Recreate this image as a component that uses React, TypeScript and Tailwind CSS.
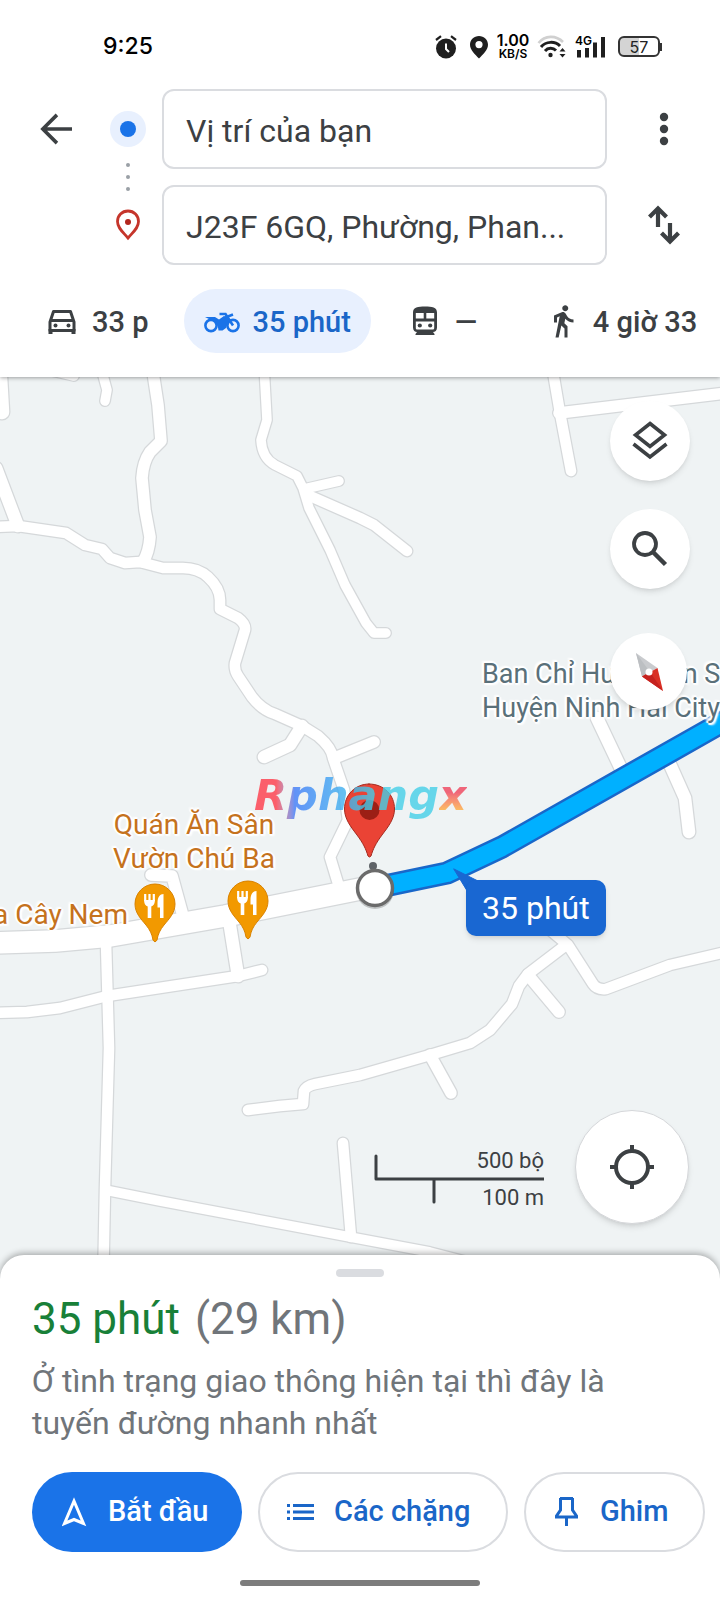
import React, { useState } from "react";

// [path, width] for every street, in map units
const roads: [string, number][] = [
  ["M-1 360 L2 412", 17],
  ["M48 370 L74 376", 12],
  ["M101 368 L107 390 L105 401", 12],
  ["M-4 468 L18 526", 15],
  ["M152 366 L158 405 L161 441 L150 452 Q143 462 142 478 L145 510 L150 537 Q149 552 143 562", 14],
  ["M-6 527 L18 526 L66 533 L85 545 L102 549 L110 558 L125 563 L140 562 L163 568 L183 568 Q198 568 208 577 Q220 588 220 600 L220 609 L238 618 Q246 624 245 630 L235 663 Q234 670 238 676 L252 697 Q262 710 275 714 L302 726 L318 736 Q332 748 333 758 L344 790 L348 820 L330 857 L340 890", 13],
  ["M264 366 L267 420 L261 440 Q262 458 275 465 L297 476 L303 488 L309 508 L330 550 L345 585 L366 623 L374 633 L386 633", 12],
  ["M304 489 L339 481", 12],
  ["M310 496 L360 518 L374 525 L407 551", 13],
  ["M302 726 L290 745 L264 757", 15],
  ["M337 757 L374 742", 14],
  ["M552 366 L560 413 L571 471", 13],
  ["M559 413 L726 393", 14],
  ["M597 718 L625 777", 15],
  ["M668 760 L685 798 L689 832", 15],
  ["M-6 943 L55 941 L110 936 L225 916 L375 886", 24],
  ["M151 875 L172 876 L183 916", 14],
  ["M229 920 L238 976", 15],
  ["M-6 1013 L27 1012 L60 1008 L107 996 L238 976 L262 970", 13],
  ["M106 942 L109 1048 L105 1188 L103 1290", 13],
  ["M105 1190 L160 1201 L350 1237 L430 1252 L500 1270", 12],
  ["M343 1143 L351 1237", 13],
  ["M248 1110 L280 1106 L303 1104 L304 1091 Q306 1086 315 1084 L360 1075 L430 1055 L470 1043 L490 1030 L512 1004 L519 986 L528 974 L566 945", 13],
  ["M550 930 L568 945 L593 984 Q597 990 606 989 L670 965 L726 952", 13],
  ["M528 975 L559 1012", 14],
  ["M430 1055 L451 1093", 14],
];

const route = "M375 888 L447 873 L502 847 L730 718";

const labelShadow =
  "[text-shadow:0_0_2px_#fff,2px_0_1px_#fff,-2px_0_1px_#fff,0_2px_1px_#fff,0_-2px_1px_#fff,2px_2px_2px_#fff,-2px_-2px_2px_#fff]";

function CarIcon() {
  return (
    <svg viewBox="0 0 36 36" className="size-9" fill="none" stroke="#3c4043" strokeWidth="3">
      <path d="M6 19 L9.500 8.500 H26.500 L30 19 V27.500 H6 Z" strokeLinejoin="round" />
      <path d="M7 17.500 H29" />
      <path d="M6.500 26 V31 M29.500 26 V31" strokeWidth="4" />
      <circle cx="11.500" cy="22.500" r="2" fill="#3c4043" stroke="none" />
      <circle cx="24.500" cy="22.500" r="2" fill="#3c4043" stroke="none" />
    </svg>
  );
}

function MotorcycleIcon() {
  return (
    <svg viewBox="0 0 36 36" className="size-9" fill="#1a73e8">
      <g fill="none" stroke="#1a73e8" strokeWidth="2.600">
        <circle cx="7" cy="22.500" r="5.600" />
        <circle cx="29" cy="22.500" r="5.600" />
        <path d="M15.500 11 H21.500 L29 22.500" />
        <path d="M20 15 L29 11.500" />
      </g>
      <path d="M1 14 H11 L15 16.500 L20 13 L25 16.500 L22 25 L18.500 27.500 H14.500 C14 21 11 17.500 5 16 Z" />
    </svg>
  );
}

function TrainIcon() {
  return (
    <svg viewBox="0 0 36 36" className="size-9">
      <path
        fillRule="evenodd"
        fill="#3c4043"
        d="M18 3.500 C25 3.500 30 4 30 9.500 V24.500 C30 27.500 28 29 26 29 L27.500 31 V32 H8.500 V31 L10 29 C8 29 6 27.500 6 24.500 V9.500 C6 4 11 3.500 18 3.500 Z M8.800 10 V15.500 H16.700 V10 Z M19.300 10 V15.500 H27.200 V10 Z M8.800 18.500 V25 C8.800 26 9.500 26.500 10.500 26.500 H25.500 C26.500 26.500 27.200 26 27.200 25 V18.500 Z"
      />
      <circle cx="12.800" cy="22.500" r="2.100" fill="#3c4043" />
      <circle cx="23.200" cy="22.500" r="2.100" fill="#3c4043" />
    </svg>
  );
}

function WalkIcon() {
  return (
    <svg viewBox="0 0 24 24" className="size-9" fill="#3c4043">
      <path d="M13.500 5.500c1.100 0 2-.9 2-2s-.9-2-2-2-2 .9-2 2 .9 2 2 2zM9.800 8.900L7 23h2.100l1.800-8 2.100 2v6h2v-7.500l-2.100-2 .6-3C14.800 12 16.800 13 19 13v-2c-1.900 0-3.500-1-4.300-2.400l-1-1.600c-.4-.6-1-1-1.700-1-.3 0-.5.1-.8.1L6 8.300V13h2V9.600l1.800-.7" />
    </svg>
  );
}

function StatusBar() {
  return (
    <div className="flex h-[89px] items-center justify-between pl-[103px] pr-[58px] pt-1 text-black">
      <span className="font-['Inter'] text-[23px] font-medium leading-none">9:25</span>
      <div className="flex items-center">
        <svg viewBox="0 0 22 24" className="mr-3 h-6 w-[22px]">
          <circle cx="11" cy="13.500" r="10" fill="#1f1f1f" />
          <path d="M1 5 L6 1.200 M16 1.200 L21 5" stroke="#1f1f1f" strokeWidth="2.200" fill="none" />
          <path d="M11 8.500 V14 L14 17" stroke="#fff" strokeWidth="2" fill="none" />
        </svg>
        <svg viewBox="0 0 20 24" className="mr-2 h-6 w-5">
          <path
            fillRule="evenodd"
            fill="#1f1f1f"
            d="M10 1 C15 1 19 4.800 19 9.800 C19 15 14 19.500 10 23.500 C6 19.500 1 15 1 9.800 C1 4.800 5 1 10 1 Z M10 6 A3.600 3.600 0 1 0 10 13.200 A3.600 3.600 0 1 0 10 6 Z"
          />
        </svg>
        <div className="mr-2 flex w-8 flex-col items-center font-['Inter'] font-semibold">
          <span className="text-base leading-[13px]">1.00</span>
          <span className="text-xs leading-[13px]">KB/S</span>
        </div>
        <svg viewBox="0 0 30 24" className="mr-2 h-6 w-[30px]" fill="none">
          <path d="M1.500 8 C8 0 19 0 26 7" stroke="#d0d0d0" strokeWidth="2.600" />
          <path d="M4 12 C9 6 18 6 23 11" stroke="#1f1f1f" strokeWidth="3" />
          <path d="M8 16 C11 12.500 16 12.500 19 15.500" stroke="#1f1f1f" strokeWidth="3" />
          <circle cx="13.500" cy="20" r="2.200" fill="#1f1f1f" />
          <path d="M22.500 16.500 L25.500 13 L28.500 16.500 Z M22.500 19 L25.500 22.500 L28.500 19 Z" fill="#1f1f1f" />
        </svg>
        <div className="relative mr-3 h-6 w-[31px]">
          <span className="absolute left-0 top-0 font-['Inter'] text-xs font-semibold leading-3">4G</span>
          <svg viewBox="0 0 31 24" className="h-6 w-[31px]" fill="#1f1f1f">
            <path d="M2 15 H6 V22.500 H2 Z M10 13 H14 V22.500 H10 Z M18 7.500 H22 V22.500 H18 Z M26 2 H30 V22.500 H26 Z" />
          </svg>
        </div>
        <div className="flex items-center">
          <div className="flex h-[21px] w-[42px] items-center justify-center rounded-md border-2 border-[#333] bg-linear-to-r from-[#d4d4d4] from-50% to-white to-50% font-['Inter'] text-base leading-none text-[#222]">
            57
          </div>
          <div className="h-2 w-0.5 bg-[#333]"></div>
        </div>
      </div>
    </div>
  );
}

function FoodPin({ className }: { className: string }) {
  return (
    <svg viewBox="0 0 42 60" className={`absolute h-[60px] w-[42px] ${className}`}>
      <path
        d="M21 1 C32 1 41 10 41 21 C41 30 35 36 30 42 C26 47 24 51 23 57 Q21 60.500 19 57 C18 51 16 47 12 42 C7 36 1 30 1 21 C1 10 10 1 21 1 Z"
        fill="#f29900"
        stroke="#d98200"
        strokeWidth="1"
      />
      <path d="M11.200 11 V18 M15.500 11 V18 M19.800 11 V18" stroke="#fff" strokeWidth="2.200" />
      <path d="M10.100 17 H20.900 C20.900 21 19.500 22.500 17.300 23.500 V35 H13.700 V23.500 C11.500 22.500 10.100 21 10.100 17 Z M23.500 20 C23.500 14 26 11 29.500 11 V35 H26 V24.500 H23.500 Z" fill="#fff" />
    </svg>
  );
}

function MapView() {
  return (
    <main className="relative flex-1 overflow-hidden bg-[#eff3f4]">
      <svg
        viewBox="0 377 720 902"
        preserveAspectRatio="xMidYMin slice"
        className="absolute inset-0 h-full w-full"
        fill="none"
        strokeLinecap="round"
        strokeLinejoin="round"
      >
        {roads.map(([d, width]) => (
          <path key={d} d={d} stroke="#d5d8da" strokeWidth={width} />
        ))}
        {roads.map(([d, width]) => (
          <path key={d} d={d} stroke="#fff" strokeWidth={width - 2.5} />
        ))}
        <path d={route} stroke="#1967c9" strokeWidth="23" />
        <path d={route} stroke="#00b0ff" strokeWidth="18" />

        {/* Destination */}
        <circle cx="375" cy="890" r="19" fill="#000" opacity="0.2" />
        <circle cx="373" cy="866" r="4" fill="#5f6368" />
        <circle cx="375" cy="888" r="17.500" fill="#fff" stroke="#6b6b6b" strokeWidth="3.500" />
        <path
          d="M369 784 C384 784 394.500 795 394.500 809 C394.500 819 388 827 382 835 C376 843 373 849 371 856 Q369.500 858 368 856 C366 849 363 843 357 835 C351 827 344.500 819 344.500 809 C344.500 795 355 784 369 784 Z"
          fill="#ea4335"
          stroke="#a52b1f"
          strokeWidth="1"
        />
        <circle cx="369.500" cy="810" r="10" fill="#9c1f15" />
        <path d="M454 869 L482 883 L480 900 L468 900 L467 891 Z" fill="#1967d2" stroke="#1967d2" strokeWidth="1" />
      </svg>

      {/* Place names */}
      <p className={`absolute left-[482px] top-[280px] whitespace-nowrap text-[27px] leading-[34px] text-[#5a7079] ${labelShadow}`}>
        Ban Chỉ Huy Quân Sự
        <br />
        Huyện Ninh Hải City
      </p>
      <p className={`absolute left-[113px] top-[431px] whitespace-nowrap text-center text-[28px] leading-[34px] text-[#c5721d] ${labelShadow}`}>
        Quán Ăn Sân
        <br />
        Vườn Chú Ba
      </p>
      <p className={`absolute -left-[7px] top-[521px] whitespace-nowrap text-[28px] leading-[34px] text-[#c5721d] ${labelShadow}`}>
        a Cây Nem
      </p>
      <FoodPin className="left-[134px] top-[506px]" />
      <FoodPin className="left-[227px] top-[503px]" />

      <div className="absolute left-[466px] top-[503px] rounded-[10px] bg-[#1967d2] px-4 py-2 text-[32px] leading-10 text-white shadow-md">
        35 phút
      </div>

      <div className="absolute left-[254px] top-[392px] flex font-['DejaVu_Sans'] text-[43px] font-bold italic leading-[52px] opacity-80">
        <span className="bg-linear-to-r from-[#ff3b4a] from-12% via-[#3f7bf8] via-22% to-[#45cfe8] to-65% bg-clip-text text-transparent">
          Rphang
        </span>
        <span className="bg-linear-to-b from-[#f0435c] from-45% to-[#ffb03b] to-80% bg-clip-text text-transparent">x</span>
      </div>

      {/* Map controls */}
      <div className="absolute right-[30px] top-6 flex flex-col gap-7">
        <button aria-label="Lớp bản đồ" className="flex size-20 items-center justify-center rounded-full bg-white shadow-md">
          <svg viewBox="0 0 40 40" className="size-10" fill="none" stroke="#3c4043" strokeWidth="3.600">
            <path d="M20 2.500 L34.500 14 L20 25.500 L5.500 14 Z" />
            <path d="M3.500 23 L20 36 L36.500 23" />
          </svg>
        </button>
        <button aria-label="Tìm kiếm" className="flex size-20 items-center justify-center rounded-full bg-white shadow-md">
          <svg viewBox="0 0 40 40" className="size-10" fill="none" stroke="#3c4043">
            <circle cx="15" cy="15" r="11" strokeWidth="3.800" />
            <path d="M23 23 L35.500 35.500" strokeWidth="4.500" />
          </svg>
        </button>
        <button aria-label="La bàn" className="mt-4 flex size-[77px] items-center justify-center rounded-full bg-white shadow-md">
          <svg viewBox="0 0 40 44" className="h-11 w-10">
            <path d="M7 3 L28.500 18 L13 26.500 Z" fill="#c9cbce" />
            <path d="M7 3 L21 22 L13 26.500 Z" fill="#bcbfc2" />
            <path d="M28.500 18 L34 41 L13 26.500 Z" fill="#d93025" />
            <path d="M21 22 L34 41 L13 26.500 Z" fill="#c5221f" />
            <circle cx="20" cy="22" r="3.500" fill="#fff" />
          </svg>
        </button>
      </div>

      <div className="absolute bottom-[55px] right-[31px] flex items-center gap-[31px]">
        <div className="relative mt-6 w-[170px] text-right text-[22px] leading-[37px] text-[#3c4043]">
          <svg viewBox="0 0 170 74" className="absolute inset-0 top-3 h-[74px] w-[170px]" fill="none" stroke="#3c4043" strokeWidth="3" strokeLinecap="round">
            <path d="M2 2 V25 H172 M60 26 V48" strokeLinejoin="round" />
          </svg>
          <div>500 bộ</div>
          <div>100 m</div>
        </div>
        <button aria-label="Vị trí hiện tại" className="flex size-[114px] items-center justify-center rounded-full border border-[#d5d7da] bg-white shadow-md">
          <svg viewBox="0 0 44 44" className="size-11" fill="none" stroke="#3c4043" strokeWidth="4">
            <circle cx="22" cy="22" r="16" />
            <path d="M22 0 V7 M22 37 V44 M0 22 H7 M37 22 H44" />
          </svg>
        </button>
      </div>
    </main>
  );
}

const modes = [
  { id: "car", icon: <CarIcon />, label: "33 p" },
  { id: "motorcycle", icon: <MotorcycleIcon />, label: "35 phút" },
  { id: "transit", icon: <TrainIcon />, label: "—" },
  { id: "walk", icon: <WalkIcon />, label: "4 giờ 33" },
];

export default function DirectionsPage() {
  const [mode, setMode] = useState("motorcycle");

  return (
    <div className="flex min-h-screen flex-col overflow-x-hidden bg-white font-['Roboto',sans-serif]">
      <header className="relative z-10 bg-white shadow-[0_1px_4px_rgba(0,0,0,0.35)]">
        <StatusBar />

        {/* Start and destination */}
        <div className="grid grid-cols-[162px_1fr_113px] gap-y-4">
          <div className="flex items-center">
            <button aria-label="Quay lại" className="ml-10">
              <svg viewBox="0 0 34 34" className="size-8" fill="none" stroke="#3c4043" strokeWidth="3.800">
                <path d="M18 2 L3 17 L18 32 M3 17 H34" />
              </svg>
            </button>
            <div className="relative ml-[38px] flex size-9 items-center justify-center rounded-full bg-[#e8f0fe]">
              <span className="size-4 rounded-full bg-[#1a73e8]"></span>
              <span className="absolute left-4 top-[52px] flex flex-col gap-2">
                <span className="size-1 rounded-full bg-[#9aa0a6]"></span>
                <span className="size-1 rounded-full bg-[#9aa0a6]"></span>
                <span className="size-1 rounded-full bg-[#9aa0a6]"></span>
              </span>
            </div>
          </div>
          <input
            aria-label="Điểm xuất phát"
            defaultValue="Vị trí của bạn"
            className="h-20 w-full min-w-0 rounded-xl border-2 border-[#dadce0] pl-[22px] pt-1 text-[32px] text-[#3c4043]"
          />
          <button aria-label="Tùy chọn khác" className="flex items-center justify-center">
            <svg viewBox="0 0 10 34" className="h-[34px] w-[10px]" fill="#3c4043">
              <circle cx="5" cy="5" r="4.200" />
              <circle cx="5" cy="17" r="4.200" />
              <circle cx="5" cy="29" r="4.200" />
            </svg>
          </button>

          <div className="flex items-center pl-[115px]">
            <svg viewBox="0 0 26 32" className="h-8 w-[26px]" fill="none">
              <path d="M13 2 C19 2 23.500 6.500 23.500 12.500 C23.500 19 18 23 13 29 C8 23 2.500 19 2.500 12.500 C2.500 6.500 7 2 13 2 Z" stroke="#c5352b" strokeWidth="2.800" />
              <circle cx="13" cy="13" r="3" fill="#b3261e" />
            </svg>
          </div>
          <input
            aria-label="Điểm đến"
            defaultValue="J23F 6GQ, Phường, Phan..."
            className="h-20 w-full min-w-0 rounded-xl border-2 border-[#dadce0] pl-[22px] pt-1 text-[32px] text-[#3c4043]"
          />
          <button aria-label="Đổi chiều" className="flex items-center justify-center">
            <svg viewBox="0 0 34 40" className="h-10 w-[34px]" fill="none" stroke="#3c4043" strokeWidth="4.200">
              <path d="M11 22 V3 M2.500 12 L11 3.500 L19.500 12" />
              <path d="M23 18 V37 M14.500 28 L23 36.500 L31.500 28" />
            </svg>
          </button>
        </div>

        {/* Travel modes */}
        <nav className="flex gap-4 overflow-hidden py-6 pl-6">
          {modes.map((m) => (
            <button
              key={m.id}
              onClick={() => setMode(m.id)}
              className={`flex h-16 min-w-[122px] shrink-0 items-center gap-3 whitespace-nowrap rounded-full px-5 text-[29px] font-medium ${
                mode === m.id ? "bg-[#e8f0fe] text-[#1a66c8]" : "text-[#3c4043]"
              }`}
            >
              {m.icon}
              <span className="pt-1">{m.label}</span>
            </button>
          ))}
        </nav>
      </header>

      <MapView />

      {/* Route summary */}
      <section className="relative -mt-6 rounded-t-3xl bg-white pb-[14px] shadow-[0_-2px_6px_rgba(0,0,0,0.3)]">
        <div className="mx-auto mb-[17px] h-[22px] w-12 pt-[14px]">
          <div className="h-2 rounded-full bg-[#dadce0]"></div>
        </div>
        <div className="px-8">
          <h1 className="text-[44px] leading-[50px] text-[#70757a]">
            <span className="text-[#188038]">35 phút</span> <span className="ml-1">(29 km)</span>
          </h1>
          <p className="mt-4 text-[32px] leading-[42px] text-[#70757a]">
            Ở tình trạng giao thông hiện tại thì đây là tuyến đường nhanh nhất
          </p>
        </div>
        <div className="mt-7 flex gap-4 pl-8 text-[29px] font-medium">
          <button className="flex h-20 w-[210px] shrink-0 items-center gap-5 rounded-full bg-[#1a73e8] pl-[30px] text-white">
            <svg viewBox="0 0 26 32" className="h-8 w-[26px]" fill="none" stroke="#fff" strokeWidth="3">
              <path d="M12 5 L21.500 27.500 L12 23.500 L2.500 27.500 Z" />
            </svg>
            Bắt đầu
          </button>
          <button className="flex h-20 w-[250px] shrink-0 items-center gap-5 rounded-full border-2 border-[#dadce0] pl-[26px] text-[#1a66c8]">
            <svg viewBox="0 0 28 32" className="h-8 w-7" fill="none" stroke="#1a66c8" strokeWidth="3">
              <path d="M7 9.500 H28 M7 16 H28 M7 22.500 H28 M1 9.500 H4 M1 16 H4 M1 22.500 H4" />
            </svg>
            Các chặng
          </button>
          <button className="flex h-20 w-[181px] shrink-0 items-center gap-5 rounded-full border-2 border-[#dadce0] pl-7 text-[#1a66c8]">
            <svg viewBox="0 0 26 32" className="h-8 w-[26px]" fill="none" stroke="#1a66c8" strokeWidth="3">
              <path d="M6 2.500 H19 M6.500 2 V14 L2.500 20 V21 H22.500 V20 L18.500 14 V2 M12.500 21 V30" />
            </svg>
            Ghim
          </button>
        </div>
        <div className="mx-auto mt-7 h-[6px] w-60 rounded-full bg-[#7d7d7d]"></div>
      </section>
    </div>
  );
}
